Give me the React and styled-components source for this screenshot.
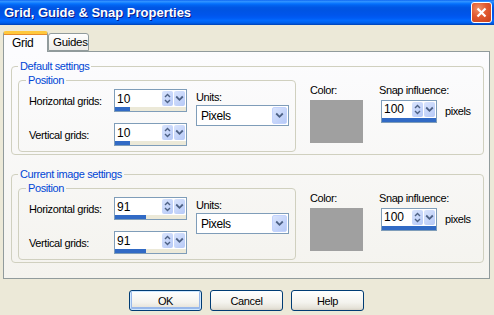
import React from 'react';
import styled, { createGlobalStyle } from 'styled-components';

const GlobalStyle = createGlobalStyle`
  html, body {
    margin: 0;
    padding: 0;
    background: #ece9d8;
  }
  body {
    font-family: "Liberation Sans", Arial, sans-serif;
    font-size: 11px;
    letter-spacing: -0.4px;
    color: #000;
  }
`;

const groups = [
  { title: 'Default settings', horizontal: 10, vertical: 10, snap: 100 },
  { title: 'Current image settings', horizontal: 91, vertical: 91, snap: 100 },
];

const UpDownIcon = () => (
  <svg width="9" height="13" viewBox="0 0 9 13">
    <path d="M2 5 L4.5 2.5 L7 5" fill="none" stroke="#4d6185" strokeWidth="1.4" />
    <path d="M2 8 L4.5 10.5 L7 8" fill="none" stroke="#4d6185" strokeWidth="1.4" />
  </svg>
);

const DownIcon = () => (
  <svg width="9" height="7" viewBox="0 0 9 7">
    <path d="M1.2 1.5 L4.5 4.8 L7.8 1.5" fill="none" stroke="#4d6185" strokeWidth="1.8" />
  </svg>
);

const Spin = ({ value, width, fill }) => (
  <SpinBox $w={width}>
    <SpinTop>
      <SpinValue>{value}</SpinValue>
      <SpinBtn><UpDownIcon /></SpinBtn>
      <SpinBtn><DownIcon /></SpinBtn>
    </SpinTop>
    <Bar>
      <BarFill style={{ width: `${fill}%` }} />
    </Bar>
  </SpinBox>
);

const SettingsGroup = ({ data }) => (
  <Group>
    <Legend>{data.title}</Legend>
    <GroupRow>
      <PositionGroup>
        <InnerLegend>Position</InnerLegend>
        <PositionGrid>
          <span>Horizontal grids:</span>
          <Spin value={data.horizontal} width={73} fill={data.horizontal === 10 ? 21 : 44} />
          <UnitsCol>
            <UnitsLabel>Units:</UnitsLabel>
            <Select>
              <span>Pixels</span>
              <SelectBtn><DownIcon /></SelectBtn>
            </Select>
          </UnitsCol>
          <span>Vertical grids:</span>
          <Spin value={data.vertical} width={73} fill={data.vertical === 10 ? 21 : 44} />
        </PositionGrid>
      </PositionGroup>
      <ColorCol>
        <span>Color:</span>
        <Swatch />
      </ColorCol>
      <SnapCol>
        <span>Snap influence:</span>
        <SnapRow>
          <Spin value={data.snap} width={56} fill={100} />
          <span>pixels</span>
        </SnapRow>
      </SnapCol>
    </GroupRow>
  </Group>
);

const App = () => (
  <>
    <GlobalStyle />
    <Window>
      <TitleBar>
        <Title>Grid, Guide &amp; Snap Properties</Title>
        <CloseButton>
          <svg width="11" height="11" viewBox="0 0 11 11">
            <path d="M1.5 1.5 L9.5 9.5 M9.5 1.5 L1.5 9.5" stroke="#fff" strokeWidth="2.2" />
          </svg>
        </CloseButton>
      </TitleBar>
      <Body>
        <Tabs>
          <Tab $active>Grid</Tab>
          <Tab>Guides</Tab>
        </Tabs>
        <Panel>
          {groups.map((g) => (
            <SettingsGroup key={g.title} data={g} />
          ))}
        </Panel>
        <ButtonRow>
          <Button $default>OK</Button>
          <Button>Cancel</Button>
          <Button>Help</Button>
        </ButtonRow>
      </Body>
    </Window>
  </>
);

const Window = styled.div`
  width: 494px;
  height: 315px;
  display: flex;
  flex-direction: column;
  background: #ece9d8;
  overflow: hidden;
`;

const TitleBar = styled.div`
  height: 25px;
  flex-shrink: 0;
  display: flex;
  align-items: center;
  justify-content: space-between;
  padding: 0 2px 0 4px;
  background: linear-gradient(
    to bottom,
    #0058ee 0%,
    #3593ff 4%,
    #288eff 8%,
    #127dff 12%,
    #036ffc 16%,
    #0262ee 22%,
    #0057e5 30%,
    #0054e3 40%,
    #0055eb 60%,
    #005bf5 72%,
    #026afe 82%,
    #0062ef 90%,
    #0052d6 96%,
    #0040ab 100%
  );
`;

const Title = styled.div`
  color: #fff;
  font-weight: bold;
  font-size: 13px;
  letter-spacing: 0;
  text-shadow: 1px 1px 0 #0a1883;
`;

const CloseButton = styled.div`
  width: 19px;
  height: 19px;
  border: 1px solid #fff;
  border-radius: 3px;
  display: flex;
  align-items: center;
  justify-content: center;
  background: radial-gradient(circle at 35% 30%, #f0926a 0%, #e2592f 45%, #c8401b 100%);
`;

const Body = styled.div`
  flex: 1;
  padding: 6px 4px 0 3px;
  display: flex;
  flex-direction: column;
`;

const Tabs = styled.div`
  display: flex;
  align-items: flex-end;
  height: 20px;
`;

const Tab = styled.div`
  position: relative;
  z-index: ${(p) => (p.$active ? 2 : 1)};
  box-sizing: border-box;
  height: ${(p) => (p.$active ? '21px' : '18px')};
  margin-bottom: ${(p) => (p.$active ? '-1px' : '0')};
  padding: ${(p) => (p.$active ? '3px 0 0 8px' : '2px 0 0 4px')};
  border: 1px solid #919b9c;
  border-bottom: ${(p) => (p.$active ? 'none' : '1px solid #919b9c')};
  border-top: ${(p) => (p.$active ? '3px solid #ffc83c' : '1px solid #919b9c')};
  border-radius: 3px 3px 0 0;
  background: ${(p) => (p.$active ? '#fcfcfe' : 'linear-gradient(#ffffff, #ecebe6)')};
  box-shadow: ${(p) => (p.$active ? 'inset 0 1px 0 #e68b2c' : 'none')};
  font-size: ${(p) => (p.$active ? '12px' : '11.5px')};
  letter-spacing: -0.3px;
  line-height: 13px;
  white-space: nowrap;
  width: ${(p) => (p.$active ? '45px' : '41px')};
`;

const Panel = styled.div`
  box-sizing: border-box;
  height: 228px;
  border: 1px solid #919b9c;
  background: linear-gradient(#fcfcfe, #f4f3ee);
  padding: 8px 5px 0 7px;
  display: flex;
  flex-direction: column;
  gap: 13px;
`;

const Group = styled.fieldset`
  margin: 0;
  min-width: 0;
  padding: 1px 2px 2px 6px;
  border: 1px solid #d0d0bf;
  border-radius: 4px;
`;

const Legend = styled.legend`
  padding: 0 2px;
  color: #0046d5;
  line-height: 13px;
`;

const InnerLegend = styled(Legend)`
  margin-left: -3px;
`;

const GroupRow = styled.div`
  display: flex;
  align-items: flex-start;
`;

const PositionGroup = styled.fieldset`
  margin: 0;
  min-width: 0;
  width: 278px;
  box-sizing: border-box;
  padding: 2px 5px 5px 10px;
  border: 1px solid #d0d0bf;
  border-radius: 4px;
`;

const PositionGrid = styled.div`
  display: grid;
  grid-template-columns: 76px 73px 1fr;
  column-gap: 9px;
  row-gap: 11px;
  align-items: center;
`;

const UnitsCol = styled.div`
  grid-column: 3;
  grid-row: 1 / span 2;
  align-self: start;
  display: flex;
  flex-direction: column;
  gap: 1px;
  padding-top: 2px;
`;

const UnitsLabel = styled.span`
  line-height: 13px;
`;

const Select = styled.div`
  width: 93px;
  height: 21px;
  box-sizing: border-box;
  border: 1px solid #7f9db9;
  background: #fff;
  display: flex;
  align-items: center;
  justify-content: space-between;
  padding: 1px 1px 1px 4px;
  font-size: 12px;
`;

const SelectBtn = styled.div`
  width: 15px;
  height: 17px;
  border-radius: 2px;
  background: linear-gradient(135deg, #d9e4fd, #b6c9f7);
  border: 1px solid #c3d3fd;
  box-sizing: border-box;
  display: flex;
  align-items: center;
  justify-content: center;
`;

const ColorCol = styled.div`
  margin: 10px 0 0 14px;
  display: flex;
  flex-direction: column;
  gap: 3px;
  line-height: 13px;
`;

const Swatch = styled.div`
  width: 53px;
  height: 43px;
  background: #a0a0a0;
`;

const SnapCol = styled.div`
  margin: 10px 0 0 16px;
  display: flex;
  flex-direction: column;
  gap: 3px;
  line-height: 13px;
`;

const SnapRow = styled.div`
  display: flex;
  align-items: center;
  gap: 8px;
  margin-left: 2px;
`;

const SpinBox = styled.div`
  width: ${(p) => p.$w}px;
  height: 23px;
  box-sizing: border-box;
  border: 1px solid #7f9db9;
  background: #fff;
  display: flex;
  flex-direction: column;
`;

const SpinTop = styled.div`
  flex: 1;
  display: flex;
  align-items: center;
  gap: 1px;
  padding: 1px 1px 0 2px;
`;

const SpinValue = styled.span`
  flex: 1;
  font-size: 12px;
  letter-spacing: 0;
`;

const SpinBtn = styled.div`
  width: 11px;
  height: 15px;
  border-radius: 2px;
  background: linear-gradient(135deg, #d9e4fd, #b6c9f7);
  display: flex;
  align-items: center;
  justify-content: center;
`;

const Bar = styled.div`
  height: 4px;
  margin-top: 1px;
  background: #ece9d8;
`;

const BarFill = styled.div`
  height: 100%;
  background: #316ac5;
`;

const ButtonRow = styled.div`
  display: flex;
  justify-content: center;
  gap: 8px;
  padding-top: 11px;
`;

const Button = styled.div`
  width: 73px;
  height: 21px;
  box-sizing: border-box;
  border: 1px solid #003c74;
  border-radius: 3px;
  background: linear-gradient(#ffffff 0%, #f4f3ee 60%, #e5e2d8 90%, #d6d0c5 100%);
  box-shadow: ${(p) => (p.$default ? 'inset 0 0 0 1px #cee7ff, inset 0 -1px 0 2px #98b8ea' : 'none')};
  display: flex;
  align-items: center;
  justify-content: center;
  font-size: 11px;
`;

export default App;
